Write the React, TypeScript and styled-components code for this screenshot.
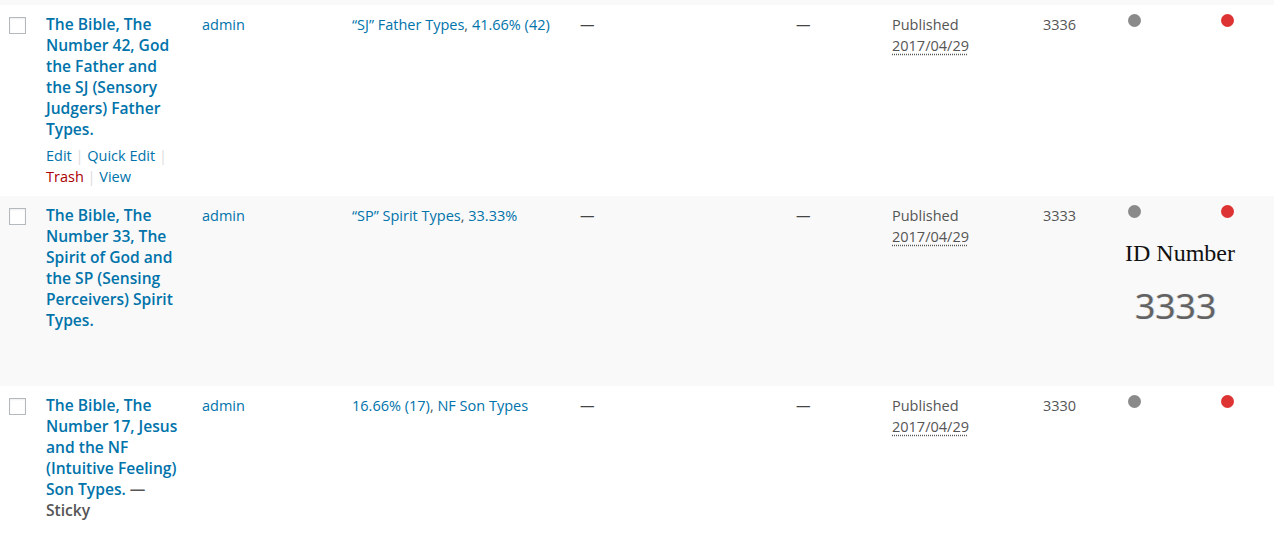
import React from 'react';
import styled, { createGlobalStyle } from 'styled-components';

const GlobalStyle = createGlobalStyle`
  html, body {
    margin: 0;
    padding: 0;
    background: #fff;
  }
  body {
    font-family: "Open Sans", "Noto Sans", sans-serif;
    color: #555;
  }
`;

const COLUMNS = '36px 156px 150px 228px 216px 96px 151px 85px 93px 1fr';

const Table = styled.div`
  width: 1274px;
  overflow: hidden;
`;

const StubRow = styled.div`
  height: 5px;
  background: #f9f9f9;
`;

const Row = styled.div<{ $striped?: boolean }>`
  display: grid;
  grid-template-columns: ${COLUMNS};
  background: ${(p) => (p.$striped ? '#f9f9f9' : '#fff')};
`;

const Cell = styled.div`
  padding: 9px 10px;
  font-size: 14.5px;
  line-height: 21px;
  color: #555;
  min-width: 0;
`;

const CheckCell = styled.div`
  padding: 12px 0 0 9px;
`;

const Checkbox = styled.input.attrs({ type: 'checkbox' })`
  appearance: none;
  margin: 0;
  display: block;
  width: 17px;
  height: 17px;
  border: 1px solid #b4b9be;
  background: #fff;
  box-shadow: inset 0 1px 2px rgba(0, 0, 0, 0.07);
  box-sizing: border-box;
`;

const Title = styled.strong`
  display: block;
  font-size: 15.6px;
  font-weight: 600;
  color: #555;
  line-height: 21px;
`;

const TitleLink = styled.a`
  color: #0073aa;
  text-decoration: none;
`;

const PostState = styled.span`
  color: #555;
`;

const RowActions = styled.div`
  margin-top: 5px;
  color: #ddd;
`;

const ActionLink = styled.a<{ $danger?: boolean }>`
  color: ${(p) => (p.$danger ? '#a00' : '#0073aa')};
  text-decoration: none;
`;

const Link = styled.a`
  color: #0073aa;
  text-decoration: none;
`;

const Dash = styled.span`
  color: #444;
`;

const DateAbbr = styled.abbr`
  text-decoration: underline dotted #555;
  text-underline-offset: 3px;
`;

const DotCell = styled.div`
  padding: 9px 10px;
  min-width: 0;
`;

const Dot = styled.span<{ $color: string }>`
  display: block;
  width: 13px;
  height: 13px;
  border-radius: 50%;
  background: ${(p) => p.$color};
`;

// pasted "ID Number" picture: overflows into the next column
const IdFigure = styled.div`
  width: 116px;
  margin: 21px 0 0 -6px;
  padding-bottom: 52px;
  white-space: nowrap;
`;

const IdCaption = styled.div`
  font-family: "Liberation Serif", "Times New Roman", serif;
  font-size: 24px;
  line-height: 28px;
  color: #111;
  text-align: center;
`;

const IdDigits = styled.div`
  margin-top: 18px;
  padding-left: 13px;
  font-family: "Open Sans", "DejaVu Sans", sans-serif;
  font-size: 35.5px;
  line-height: 40px;
  color: #626262;
  text-shadow: 1px 0 0 rgba(120, 170, 230, 0.35), -1px 0 0 rgba(230, 180, 120, 0.3), 0 0 1px rgba(0, 0, 0, 0.25);
`;

interface Post {
  id: number;
  title: string;
  sticky?: boolean;
  categories: string[];
  actions?: boolean;
  figure?: boolean;
}

const posts: Post[] = [
  {
    id: 3336,
    title: 'The Bible, The Number 42, God the Father and the SJ (Sensory Judgers) Father Types.',
    categories: ['“SJ” Father Types', '41.66% (42)'],
    actions: true,
  },
  {
    id: 3333,
    title: 'The Bible, The Number 33, The Spirit of God and the SP (Sensing Perceivers) Spirit Types.',
    categories: ['“SP” Spirit Types', '33.33%'],
    figure: true,
  },
  {
    id: 3330,
    title: 'The Bible, The Number 17, Jesus and the NF (Intuitive Feeling) Son Types.',
    categories: ['16.66% (17)', 'NF Son Types'],
    sticky: true,
  },
];

export default function App() {
  return (
    <>
      <GlobalStyle />
      <Table>
        <StubRow />
        {posts.map((post, index) => (
          <Row key={post.id} $striped={index % 2 === 1}>
            <CheckCell>
              <Checkbox />
            </CheckCell>
            <Cell>
              <Title>
                <TitleLink href="#">{post.title}</TitleLink>
                {post.sticky && (
                  <>
                    {' —'} <PostState>Sticky</PostState>
                  </>
                )}
              </Title>
              {post.actions && (
                <RowActions>
                  <ActionLink href="#">Edit</ActionLink> | <ActionLink href="#">Quick Edit</ActionLink> |{' '}
                  <ActionLink href="#" $danger>Trash</ActionLink> | <ActionLink href="#">View</ActionLink>
                </RowActions>
              )}
            </Cell>
            <Cell>
              <Link href="#">admin</Link>
            </Cell>
            <Cell>
              {post.categories.map((cat, i) => (
                <React.Fragment key={cat}>
                  {i > 0 && ', '}
                  <Link href="#">{cat}</Link>
                </React.Fragment>
              ))}
            </Cell>
            <Cell>
              <Dash>—</Dash>
            </Cell>
            <Cell>
              <Dash>—</Dash>
            </Cell>
            <Cell>
              Published
              <br />
              <DateAbbr title="2017/04/29">2017/04/29</DateAbbr>
            </Cell>
            <Cell>{post.id}</Cell>
            <DotCell>
              <Dot $color="#8a8a8a" />
              {post.figure && (
                <IdFigure>
                  <IdCaption>ID Number</IdCaption>
                  <IdDigits>{post.id}</IdDigits>
                </IdFigure>
              )}
            </DotCell>
            <DotCell>
              <Dot $color="#dd3333" />
            </DotCell>
          </Row>
        ))}
      </Table>
    </>
  );
}
